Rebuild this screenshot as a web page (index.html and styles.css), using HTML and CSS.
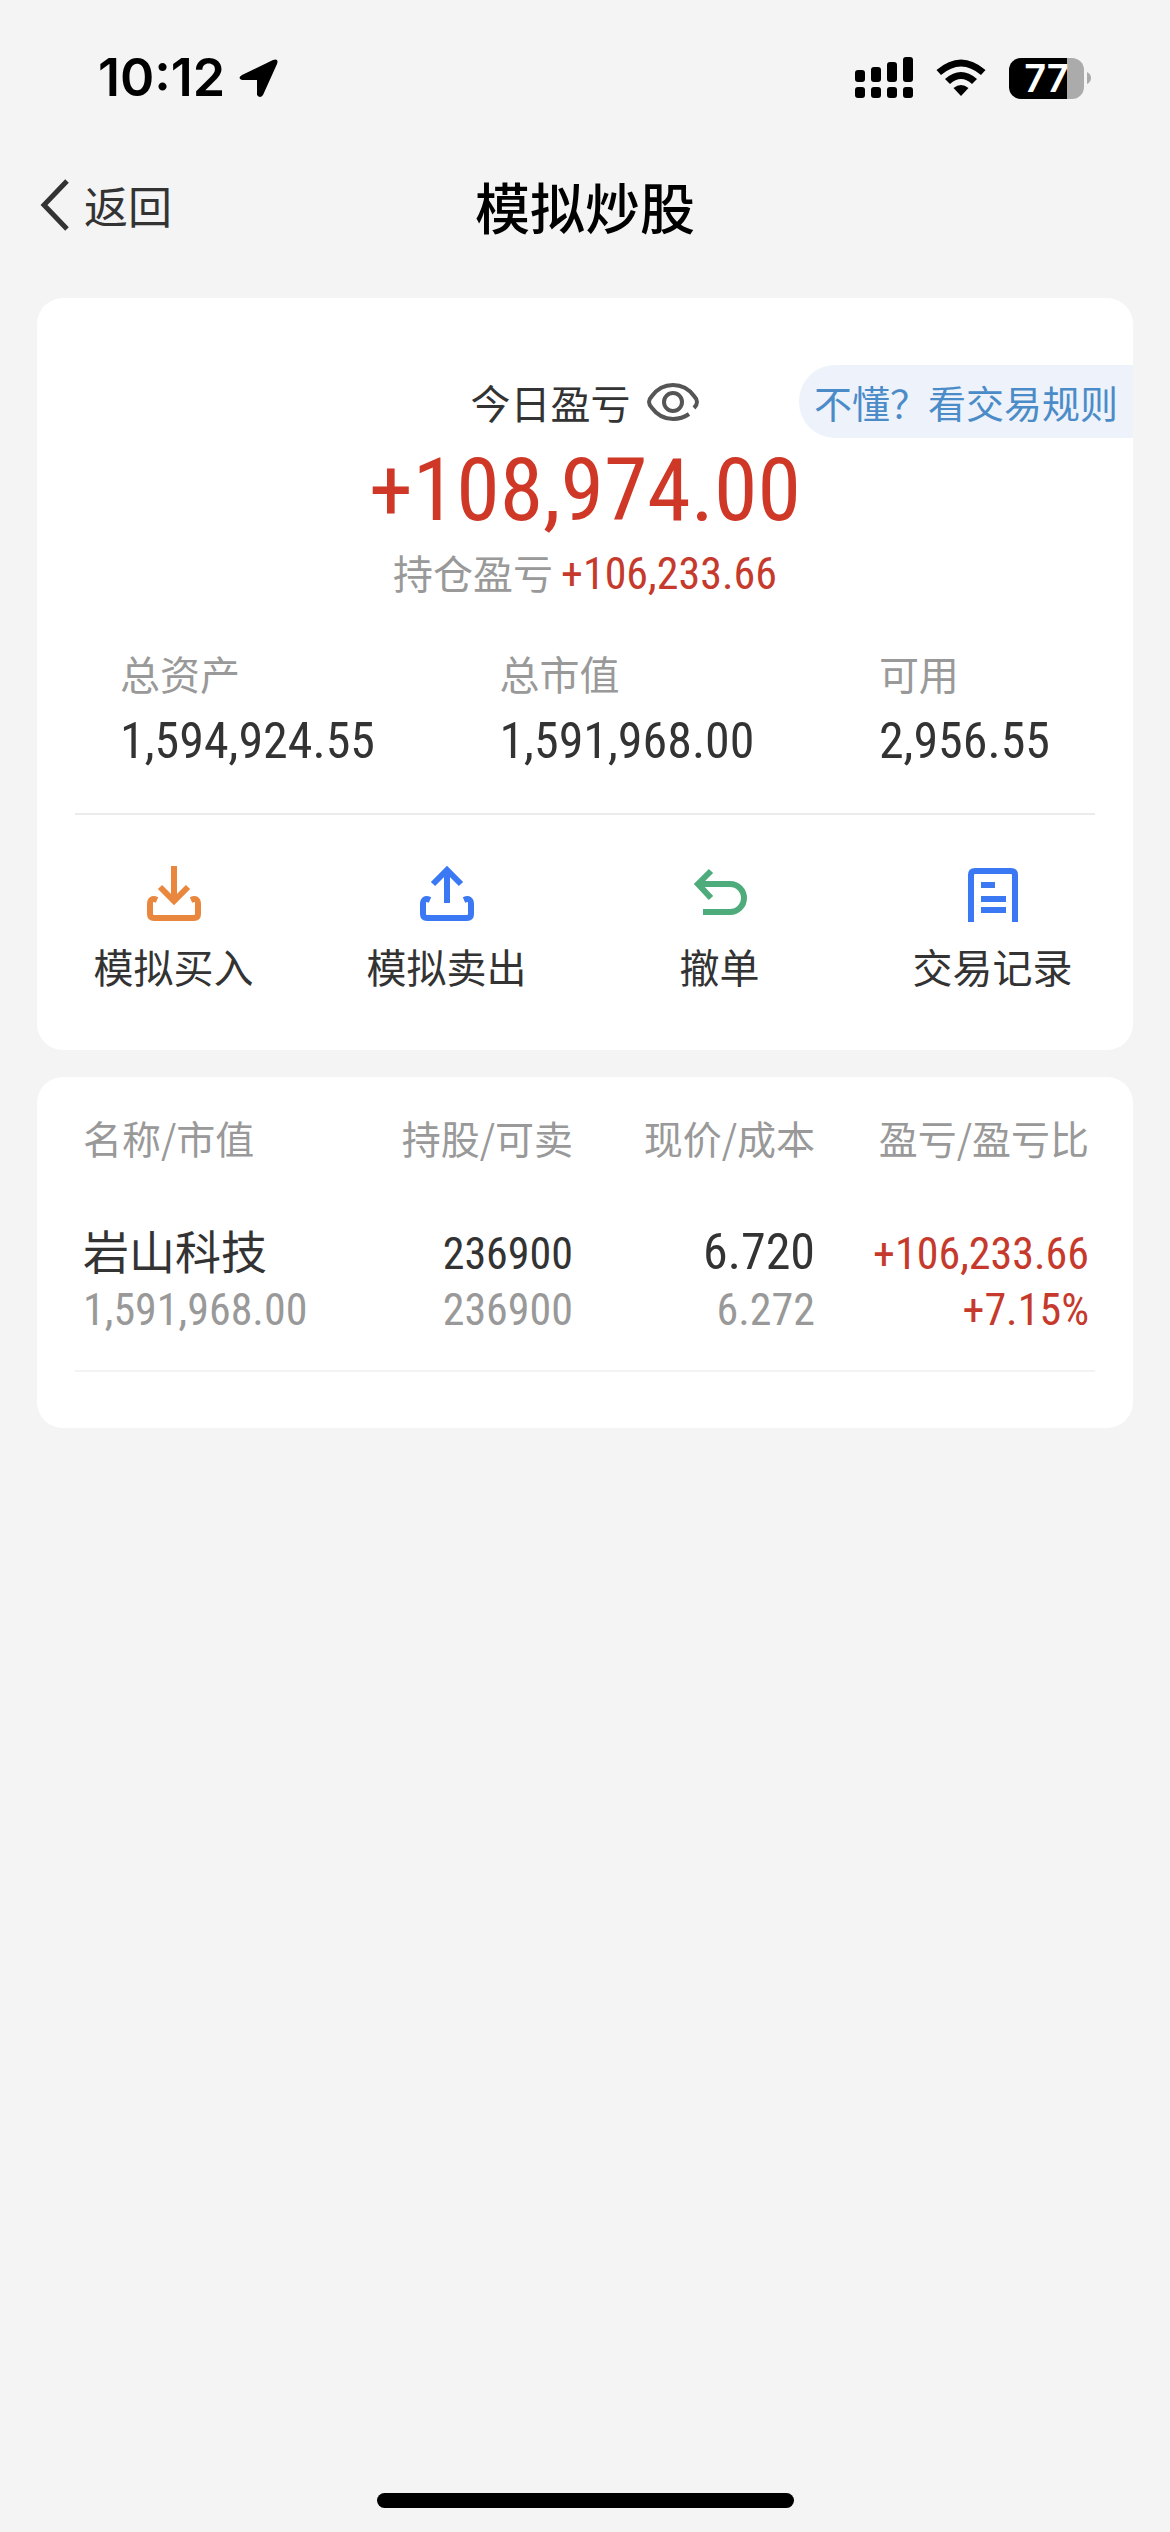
FILE: index.html
```html
<!DOCTYPE html>
<html lang="zh-CN">
<head>
    <meta charset="UTF-8">
    <meta name="viewport" content="width=device-width, initial-scale=1.0">
    <title>模拟炒股</title>
    <link rel="stylesheet" href="styles.css">
</head>
<body>
    <div class="status-bar">
        <div class="status-left">
            <span class="time">10:12</span>
            <svg width="40" height="40" viewBox="0 0 40 40"><path d="M3 17 L34 2 Q40 0 38 6 L24 37 Q21 41 18 37 V22 H3 Q-2 20 3 17 Z"/></svg>
        </div>
        <div class="status-right">
            <svg width="58" height="42" viewBox="0 0 58 42">
                <rect x="0" y="13" width="10" height="12" rx="3"/>
                <rect x="16" y="10" width="10" height="15" rx="3"/>
                <rect x="32" y="5" width="10" height="20" rx="3"/>
                <rect x="48" y="0" width="10" height="25" rx="3"/>
                <rect x="0" y="30" width="10" height="11" rx="3"/>
                <rect x="16" y="30" width="10" height="11" rx="3"/>
                <rect x="32" y="30" width="10" height="11" rx="3"/>
                <rect x="48" y="30" width="10" height="11" rx="3"/>
            </svg>
            <svg width="50" height="38" viewBox="0 0 50 38">
                <path d="M0.500 11 Q25 -10 49.500 11 L45 16 Q25 -1 5 16 Z"/>
                <path d="M9 20 Q25 6 41 20 L36 25 Q25 15 14 25 Z"/>
                <path d="M17.500 29 Q25 23 32.500 29 L25 37 Z"/>
            </svg>
            <div class="battery">
                <span class="battery-level">77</span>
                <svg width="5" height="12" viewBox="0 0 5 12"><path d="M0 0 Q4 2 4 6 Q4 10 0 12 Z" fill="#ababab"/></svg>
            </div>
        </div>
    </div>

    <header class="nav-bar">
        <a class="back" href="#">
            <svg width="30" height="52" viewBox="0 0 30 52"><path d="M27 2 L4 26 L27 50" fill="none" stroke="#333" stroke-width="5"/></svg>
            返回
        </a>
        <h1>模拟炒股</h1>
    </header>

    <main>
        <section class="card account">
            <a class="rules" href="#">不懂？看交易规则</a>
            <div class="today">
                <span>今日盈亏</span>
                <button class="eye" aria-label="隐藏金额">
                    <svg width="54" height="38" viewBox="0 0 54 38" fill="none" stroke="#555" stroke-width="4">
                        <path d="M43 31 Q36 36 27 36 Q14 36 6 25 Q0 19 6 13 Q14 2 27 2 Q40 2 48 13 Q54 19 48 25"/>
                        <circle cx="27" cy="19" r="9"/>
                    </svg>
                </button>
            </div>
            <div class="today-value">+108,974.00</div>
            <div class="position">持仓盈亏<span class="num">+106,233.66</span></div>

            <dl class="assets">
                <div>
                    <dt>总资产</dt>
                    <dd>1,594,924.55</dd>
                </div>
                <div>
                    <dt>总市值</dt>
                    <dd>1,591,968.00</dd>
                </div>
                <div>
                    <dt>可用</dt>
                    <dd>2,956.55</dd>
                </div>
            </dl>

            <nav class="actions">
                <a href="#">
                    <svg width="56" height="56" viewBox="0 0 56 56" fill="none" stroke="#ea873e" stroke-width="6">
                        <path d="M28 0 V36 M14 21 L28 35 L42 21"/>
                        <path d="M11 34 Q4 31 4 38 V48 Q4 52 8 52 H48 Q52 52 52 48 V38 Q52 31 45 34"/>
                    </svg>
                    模拟买入
                </a>
                <a href="#">
                    <svg width="56" height="56" viewBox="0 0 56 56" fill="none" stroke="#3b78f3" stroke-width="6">
                        <path d="M28 37 V5 M14 18 L28 4 L42 18"/>
                        <path d="M11 34 Q4 31 4 38 V48 Q4 52 8 52 H48 Q52 52 52 48 V38 Q52 31 45 34"/>
                    </svg>
                    模拟卖出
                </a>
                <a href="#">
                    <svg width="56" height="56" viewBox="0 0 56 56" fill="none" stroke="#4eab7b" stroke-width="6">
                        <path d="M19 5 L6 18 L19 32"/>
                        <path d="M7 18 H38 A14 14 0 0 1 38 46 H11"/>
                    </svg>
                    撤单
                </a>
                <a href="#">
                    <svg width="56" height="56" viewBox="0 0 56 56" fill="none" stroke="#3b78f3" stroke-width="6">
                        <path d="M6 56 V9 Q6 5 10 5 H46 Q50 5 50 9 V56"/>
                        <path d="M16 19 H30 M16 33 H41 M16 44 H41"/>
                    </svg>
                    交易记录
                </a>
            </nav>
        </section>

        <section class="card holdings">
            <table>
                <thead>
                    <tr>
                        <th>名称/市值</th>
                        <th class="shares">持股/可卖</th>
                        <th class="price">现价/成本</th>
                        <th class="profit">盈亏/盈亏比</th>
                    </tr>
                </thead>
                <tbody>
                    <tr class="first-line">
                        <td class="name">岩山科技</td>
                        <td>236900</td>
                        <td class="large">6.720</td>
                        <td class="up">+106,233.66</td>
                    </tr>
                    <tr class="second-line">
                        <td>1,591,968.00</td>
                        <td>236900</td>
                        <td>6.272</td>
                        <td class="up">+7.15%</td>
                    </tr>
                </tbody>
            </table>
        </section>
    </main>

    <div class="home-indicator"></div>
</body>
</html>
```
FILE: styles.css
```css
* {
    box-sizing: border-box;
}
body {
    margin: 0;
    min-height: 100vh;
    display: flex;
    flex-direction: column;
    background-color: #f4f4f4;
    color: #333;
    font-family: "Noto Sans CJK SC", sans-serif;
    font-size: 40px;
    line-height: 56px;
}
svg {
    display: block;
    flex-shrink: 0;
}
a {
    color: inherit;
    text-decoration: none;
}

/* status bar */
.status-bar {
    display: flex;
    justify-content: space-between;
    align-items: center;
    height: 156px;
    padding: 0 78px 0 98px;
    color: #000;
    font-family: Inter, sans-serif;
    font-weight: 600;
}
.status-left, .status-right, .battery {
    display: flex;
    align-items: center;
}
.status-left {
    gap: 14px;
}
.status-right {
    gap: 23px;
}
.time {
    font-size: 52px;
}
.battery {
    gap: 3px;
}
.battery-level {
    width: 75px;
    height: 41px;
    border-radius: 12px;
    background: linear-gradient(to right, #000 58px, #ababab 58px);
    color: #fff;
    font-size: 38px;
    line-height: 41px;
    text-align: center;
}

/* title bar */
.nav-bar {
    display: grid;
    grid-template-columns: 1fr auto 1fr;
    align-items: center;
    height: 98px;
    padding: 0 40px;
}
.back {
    display: flex;
    align-items: center;
    gap: 14px;
    font-size: 44px;
}
h1 {
    margin: 0;
    color: #000;
    font-size: 55px;
    font-weight: 500;
}

/* cards */
main {
    display: flex;
    flex-direction: column;
    gap: 27px;
    padding: 44px 37px;
}
.card {
    border-radius: 26px;
    background-color: #fff;
}
.account {
    position: relative;
    padding: 76px 0 56px;
}
.rules {
    position: absolute;
    top: 67px;
    right: 0;
    padding: 0 15px;
    border-radius: 36px 0 0 36px;
    background-color: #edf2fb;
    color: #4b8cc8;
    font-size: 38px;
    line-height: 73px;
}
.today {
    display: flex;
    justify-content: center;
    align-items: center;
    gap: 15px;
}
.eye {
    padding: 0;
    border: none;
    background: none;
    cursor: pointer;
}
.num, .today-value, dd, td {
    font-family: "Roboto Condensed", Roboto, "Noto Sans CJK SC", sans-serif;
}
.today-value {
    margin-top: 6px;
    color: #cf3727;
    font-size: 88px;
    line-height: 108px;
    text-align: center;
}
.position {
    display: flex;
    justify-content: center;
    align-items: baseline;
    gap: 8px;
    color: #999;
}
.num {
    color: #c53a2c;
    font-size: 44px;
}
.assets {
    display: flex;
    justify-content: space-between;
    margin: 0 38px;
    padding: 43px 45px 32px;
    border-bottom: 2px solid #ebebeb;
}
.assets dt {
    color: #999;
}
.assets dd {
    margin: 0;
    font-size: 50px;
    line-height: 80px;
}
.actions {
    display: flex;
    padding: 51px 4px 0 0;
}
.actions a {
    flex: 1;
    display: flex;
    flex-direction: column;
    align-items: center;
    gap: 16px;
}

/* holdings table */
.holdings {
    padding: 32px 38px 56px;
}
table {
    width: 100%;
    border-collapse: collapse;
    border-bottom: 2px solid #f3f3f3;
    text-align: right;
}
th, td {
    padding: 0;
}
th {
    padding-bottom: 56px;
    color: #999;
    font-size: 39px;
    font-weight: 400;
}
th:first-child, td:first-child {
    padding-left: 8px;
    text-align: left;
}
th:last-child, td:last-child {
    padding-right: 6px;
}
.shares {
    width: 250px;
}
.price {
    width: 242px;
}
.profit {
    width: 280px;
}
td {
    font-size: 44px;
    vertical-align: baseline;
}
.first-line .name {
    font-family: "Noto Sans CJK SC", sans-serif;
    font-size: 46px;
}
.first-line .large {
    font-size: 50px;
}
.second-line td {
    padding-bottom: 32px;
    color: #999;
}
.first-line .up, .second-line .up {
    color: #c53a2c;
}

.home-indicator {
    width: 417px;
    height: 15px;
    margin: auto auto 24px;
    border-radius: 8px;
    background-color: #000;
}
```
